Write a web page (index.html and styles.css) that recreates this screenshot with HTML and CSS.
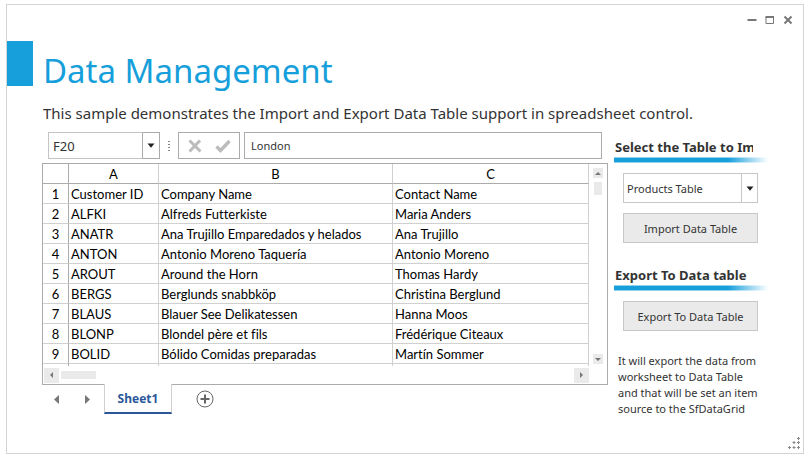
FILE: index.html
```html
<!DOCTYPE html>
<html lang="en">
<head>
<meta charset="utf-8">
<title>Data Management</title>
<link rel="stylesheet" href="styles.css">
</head>
<body>
<div class="window">
  <div class="titlebar">
    <button class="win-btn" aria-label="Minimize"><svg width="10" height="10" viewBox="0 0 10 10"><path d="M0.5 5h9" stroke="#777" stroke-width="2"/></svg></button>
    <button class="win-btn" aria-label="Maximize"><svg width="10" height="10" viewBox="0 0 10 10"><path d="M1 2v6.5h7.500V2" fill="none" stroke="#777"/><path d="M0.5 2H9" stroke="#777" stroke-width="2"/></svg></button>
    <button class="win-btn" aria-label="Close"><svg width="10" height="10" viewBox="0 0 10 10"><path d="M1.5 1.5l7 7M8.5 1.5l-7 7" stroke="#777" stroke-width="2"/></svg></button>
  </div>
  <header class="header">
    <span class="accent"></span>
    <h1 class="title">Data Management</h1>
  </header>
  <p class="intro">This sample demonstrates the Import and Export Data Table support in spreadsheet control.</p>
  <main class="main">
    <section class="sheet">
      <div class="formula-bar">
        <div class="name-box">
          <input class="name-input" aria-label="Name box" value="F20">
          <button class="name-drop" aria-label="Open name list"><svg width="8" height="5" viewBox="0 0 8 5"><path d="M0.5 0.5h7L4 4.8z" fill="#222"/></svg></button>
        </div>
        <svg class="dots" width="3" height="10" viewBox="0 0 3 10" shape-rendering="crispEdges"><path d="M1 0v10" stroke="#888" stroke-dasharray="1 2" stroke-width="2"/></svg>
        <div class="edit-actions">
          <button class="plain" aria-label="Cancel"><svg width="14" height="14" viewBox="0 0 14 14"><path d="M1.5 1.5l11 11M12 1.5L1.5 12.5" stroke="#bcbcbc" stroke-width="3"/></svg></button>
          <button class="plain" aria-label="Enter"><svg width="16" height="14" viewBox="0 0 16 14"><path d="M1.5 7.5l4 4L14.5 2" fill="none" stroke="#bcbcbc" stroke-width="3.4"/></svg></button>
        </div>
        <input class="formula-input" aria-label="Formula" value="London">
      </div>
      <div class="grid">
        <div class="grid-body">
          <table class="cells">
            <colgroup><col class="col-n"><col class="col-a"><col class="col-b"><col></colgroup>
            <thead><tr><th></th><th>A</th><th>B</th><th>C</th></tr></thead>
            <tbody>
              <tr><th>1</th><td>Customer ID</td><td>Company Name</td><td>Contact Name</td></tr>
              <tr><th>2</th><td>ALFKI</td><td>Alfreds Futterkiste</td><td>Maria Anders</td></tr>
              <tr><th>3</th><td>ANATR</td><td>Ana Trujillo Emparedados y helados</td><td>Ana Trujillo</td></tr>
              <tr><th>4</th><td>ANTON</td><td>Antonio Moreno Taquería</td><td>Antonio Moreno</td></tr>
              <tr><th>5</th><td>AROUT</td><td>Around the Horn</td><td>Thomas Hardy</td></tr>
              <tr><th>6</th><td>BERGS</td><td>Berglunds snabbköp</td><td>Christina Berglund</td></tr>
              <tr><th>7</th><td>BLAUS</td><td>Blauer See Delikatessen</td><td>Hanna Moos</td></tr>
              <tr><th>8</th><td>BLONP</td><td>Blondel père et fils</td><td>Frédérique Citeaux</td></tr>
              <tr><th>9</th><td>BOLID</td><td>Bólido Comidas preparadas</td><td>Martín Sommer</td></tr>
              <tr class="cut"><th></th><td></td><td></td><td></td></tr>
            </tbody>
          </table>
          <div class="vscroll">
            <button class="v-btn" aria-label="Scroll up"><svg width="6" height="3" viewBox="0 0 6 3"><path d="M0 3h6L3 0z" fill="#777"/></svg></button>
            <span class="v-thumb"></span>
            <button class="v-btn v-down" aria-label="Scroll down"><svg width="6" height="3" viewBox="0 0 6 3"><path d="M0 0h6L3 3z" fill="#777"/></svg></button>
          </div>
        </div>
        <div class="hscroll">
          <button class="h-btn" aria-label="Scroll left"><svg width="3" height="6" viewBox="0 0 3 6"><path d="M3 0v6L0 3z" fill="#777"/></svg></button>
          <span class="h-thumb"></span>
          <button class="h-btn h-right" aria-label="Scroll right"><svg width="3" height="6" viewBox="0 0 3 6"><path d="M0 0v6l3-3z" fill="#777"/></svg></button>
        </div>
      </div>
      <nav class="tabs">
        <button class="plain nav-btn" aria-label="Previous sheet"><svg width="5" height="9" viewBox="0 0 5 9"><path d="M5 0v9L0 4.5z" fill="#777"/></svg></button>
        <button class="plain nav-btn" aria-label="Next sheet"><svg width="5" height="9" viewBox="0 0 5 9"><path d="M0 0v9l5-4.5z" fill="#777"/></svg></button>
        <button class="tab">Sheet1</button>
        <button class="plain add" aria-label="Add sheet"><svg width="18" height="18" viewBox="0 0 18 18"><circle cx="9" cy="9" r="8" fill="none" stroke="#666"/><path d="M9 4.5v9M4.5 9h9" stroke="#666" stroke-width="2"/></svg></button>
      </nav>
    </section>
    <aside class="panel">
      <h2 class="heading"><label for="table-choice">Select the Table to Import</label></h2>
      <div class="rule"></div>
      <div class="select-wrap">
        <select id="table-choice" class="select"><option>Products Table</option></select>
        <span class="select-arrow"><svg width="8" height="5" viewBox="0 0 8 5"><path d="M0.5 0.5h7L4 4.8z" fill="#222"/></svg></span>
      </div>
      <button class="action">Import Data Table</button>
      <h2 class="heading second">Export To Data table</h2>
      <div class="rule"></div>
      <button class="action">Export To Data Table</button>
      <p class="note">It will export the data from<br>worksheet to Data Table<br>and that will be set an item<br>source to the SfDataGrid</p>
    </aside>
  </main>
  <svg class="grip" width="12" height="12" viewBox="0 0 12 12"><path d="M0 10.5h3M1.5 9v3M4.500 10.500h3M6 9v3M9 10.500h3M10.500 9v3M4.500 5.500h3M6 4v3M9 5.500h3M10.500 4v3M9 1.500h3M10.500 0v3" stroke="#888"/></svg>
</div>
</body>
</html>
```
FILE: styles.css
```css
* { box-sizing: border-box; }
body {
  margin: 0;
  background: #fff;
  color: #333;
  font-family: "Noto Sans", "Open Sans", sans-serif;
}
button, input, select { font: inherit; color: inherit; margin: 0; border-radius: 0; }
button { padding: 0; }
svg { display: block; }
.window {
  position: relative;
  margin: 4px 4px 0 6px;
  min-height: calc(100vh - 9px);
  border: 1px solid #d4d4d4;
}
.titlebar {
  display: flex;
  justify-content: flex-end;
  gap: 8px;
  height: 36px;
  padding: 10px 10px 0 0;
}
.win-btn, .plain { border: 0; background: none; }
.win-btn { width: 10px; height: 10px; }
.header { display: flex; height: 60px; }
.accent { width: 26px; height: 45px; background: #169fdb; }
.title {
  margin: 4px 0 0 10px;
  font-size: 33px;
  font-weight: 400;
  line-height: 52px;
  color: #169fdb;
  white-space: nowrap;
}
.intro {
  margin: 0 0 7px 36px;
  font-size: 15px;
  line-height: 24px;
  white-space: nowrap;
}
.main { display: flex; }
.sheet { flex: 1; min-width: 0; padding-left: 35px; }
.formula-bar {
  display: flex;
  align-items: center;
  height: 27px;
  margin: 0 6px 4px 6px;
}
.name-box { display: flex; width: 112px; height: 27px; }
.name-input {
  flex: 1;
  min-width: 0;
  padding: 0 4px;
  border: 1px solid #c4c4c4;
  border-right-color: #ababab;
  font-size: 13px;
}
.name-drop {
  display: grid;
  place-items: center;
  width: 17px;
  border: 1px solid #ababab;
  border-left: 0;
  background: #fff;
}
.dots { margin: 0 7px 0 8px; }
.edit-actions {
  display: flex;
  align-items: center;
  justify-content: center;
  gap: 13px;
  width: 62px;
  height: 27px;
  border: 1px solid #ababab;
}
.formula-input {
  flex: 1;
  min-width: 0;
  height: 27px;
  margin-left: 4px;
  padding: 0 6px;
  border: 1px solid #ababab;
  font-size: 11px;
}
.grid { border: 1px solid #ababab; height: 222px; }
.grid-body { display: flex; height: 202px; }
.cells {
  flex: 1;
  width: 0;
  table-layout: fixed;
  border-collapse: separate;
  border-spacing: 0;
  font-family: Lato, sans-serif;
  font-size: 13px;
  font-variant-ligatures: none;
  line-height: 18px;
  color: #000;
}
.col-n { width: 26px; }
.col-a { width: 90px; }
.col-b { width: 234px; }
.cells th, .cells td {
  height: 20px;
  padding: 1px 0 0 2px;
  border-right: 1px solid #d0d0d0;
  border-bottom: 1px solid #d0d0d0;
  font-weight: 400;
  text-align: left;
  white-space: nowrap;
}
.cells th { padding: 1px 0 0; text-align: center; }
.cells thead th { border-bottom-color: #ababab; }
.cells tr > th:first-child { border-right-color: #ababab; }
.cells .cut th, .cells .cut td { height: 2px; padding: 0; border-bottom: 0; line-height: 2px; }
.vscroll {
  display: flex;
  flex-direction: column;
  align-items: center;
  gap: 4px;
  width: 18px;
  padding: 4px 4px 2px;
}
.v-btn, .h-btn { display: grid; place-items: center; border: 0; background: #eaeaea; }
.v-btn { width: 10px; height: 10px; }
.v-thumb { width: 8px; height: 13px; background: #eaeaea; }
.v-down { margin-top: auto; }
.hscroll {
  display: flex;
  align-items: center;
  gap: 2px;
  height: 18px;
  padding: 0 18px 0 1px;
}
.h-btn { width: 15px; height: 15px; }
.h-thumb { width: 35px; height: 8px; background: #eaeaea; }
.h-right { margin-left: auto; }
.tabs { display: flex; align-items: center; height: 30px; margin-top: -1px; padding-left: 12px; }
.nav-btn { display: block; width: 5px; margin-right: 26px; }
.nav-btn + .nav-btn { margin-right: 14px; }
.tab {
  position: relative;
  width: 68px;
  height: 30px;
  border: 1px solid #d0d0d0;
  border-top: 0;
  border-bottom: 2px solid #2b579a;
  background: #fff;
  color: #2b579a;
  font-size: 12px;
  font-weight: 700;
}
.add { margin-left: 24px; }
.panel { width: 195px; padding-left: 6px; }
.heading {
  width: 138px;
  margin: 5px 0 0 1px;
  overflow: hidden;
  font-size: 13px;
  font-weight: 700;
  line-height: 20px;
  white-space: nowrap;
}
.second { margin-top: 22px; }
.rule {
  width: 154px;
  height: 6px;
  margin-bottom: 10px;
  border-top: 1px solid #fff8;
  border-bottom: 1px solid #fff8;
  background: linear-gradient(90deg, #169fdb 74%, #fff) border-box;
}
.select-wrap { position: relative; width: 135px; height: 30px; margin: 0 0 10px 9px; }
.select {
  width: 100%;
  height: 100%;
  padding: 0 20px 0 3px;
  border: 1px solid #c8c8c8;
  background: #fff;
  appearance: none;
  font-size: 11px;
}
.select-arrow {
  position: absolute;
  top: 0;
  right: 0;
  bottom: 0;
  display: grid;
  place-items: center;
  width: 17px;
  border-left: 1px solid #c8c8c8;
  pointer-events: none;
}
.action {
  display: block;
  width: 135px;
  height: 30px;
  margin-left: 9px;
  border: 1px solid #c8c8c8;
  background: #eaeaea;
  font-size: 11px;
}
.note {
  margin: 22px 0 0 4px;
  font-size: 11px;
  line-height: 16px;
  white-space: nowrap;
}
.grip { position: absolute; right: 3px; bottom: 4px; }
```
